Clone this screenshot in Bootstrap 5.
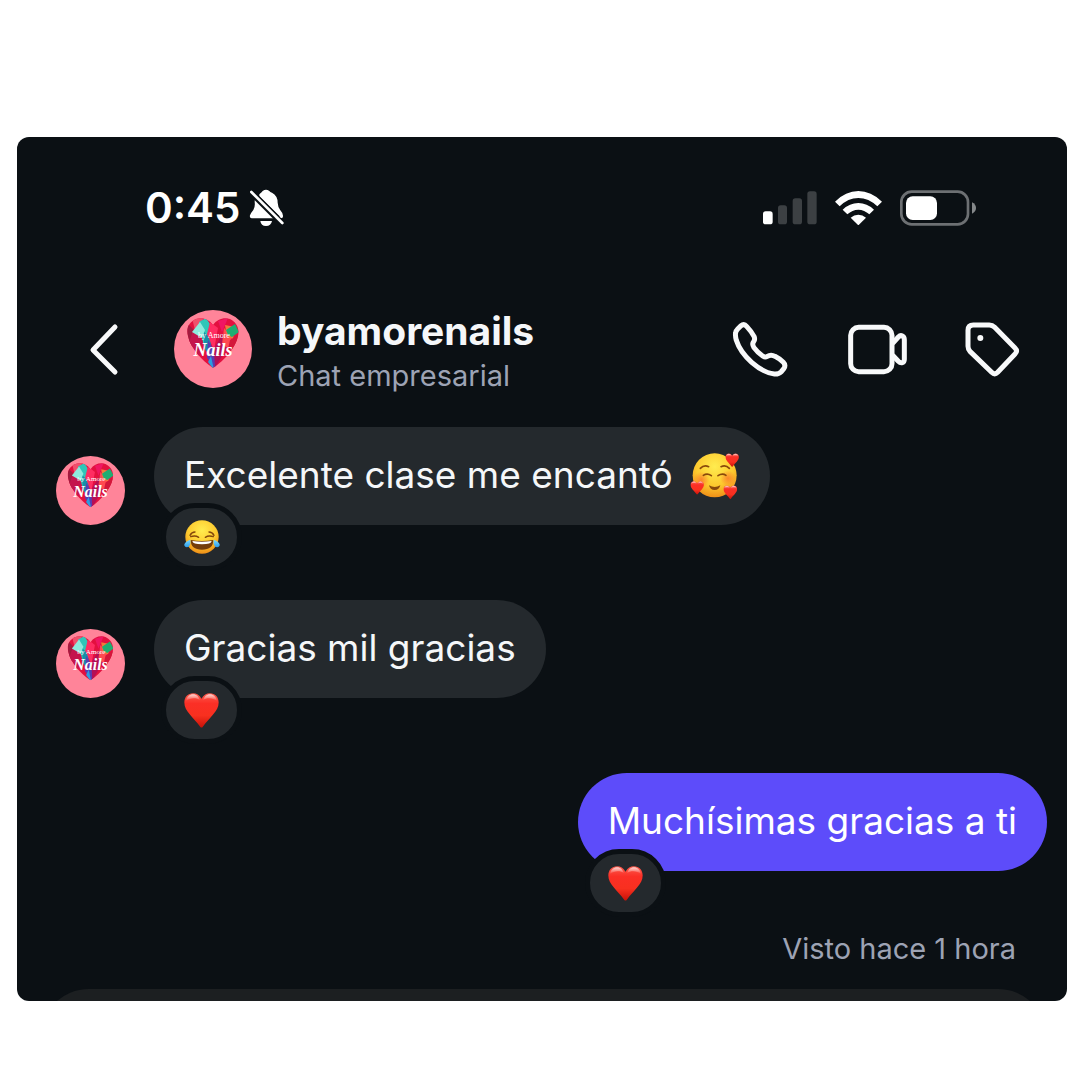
<!DOCTYPE html>
<html lang="es">
<head>
<meta charset="utf-8">
<meta name="viewport" content="width=device-width, initial-scale=1">
<title>byamorenails</title>
<link href="https://cdn.jsdelivr.net/npm/bootstrap@5.3.0/dist/css/bootstrap.min.css" rel="stylesheet">
<style>
  body { background: #fff; font-family: Inter, "Liberation Sans", sans-serif; }
  svg { display: block; flex: none; }
  .phone-panel { margin: 137px 13px 79px 17px; background: #0b1014; border-radius: 12px; color: #f5f7f9; }
  .status-row { padding: 41px 91px 0 128px; height: 101px; }
  .clock { font-size: 42px; line-height: 60px; font-weight: 600; color: #fff; }
  .status-icons { gap: 18px; }
  .chat-head { padding: 68px 45px 0 71px; }
  .head-actions { gap: 56px; }
  .icon-btn { padding: 0; border: 0; background: none; color: #f8f9fa; }
  .back-btn { margin-right: 54px; }
  .face-lg { width: 78px; height: 78px; }
  .face-sm { width: 69px; height: 69px; margin-right: 29px; }
  .face-by { font: 8px/1 "Liberation Serif", serif; fill: #fff; }
  .face-nails { font: italic 700 18px/1 "Liberation Serif", serif; fill: #fff; }
  .who { margin-left: 25px; }
  .who-name { font-size: 39px; line-height: 50px; font-weight: 700; margin: 0; }
  .muted-text { font-size: 29px; line-height: 40px; color: #9da3b4; margin: 0; }
  .who .muted-text { margin-bottom: -4px; }
  .thread { padding: 35px 20px 0 39px; }
  .msg { margin-bottom: 75px; }
  .bubble { position: relative; height: 98px; padding: 0 30px; border-radius: 49px; background: #24292d; font-size: 37px; line-height: 56px; gap: 17px; }
  .bubble p { margin: 0 0 2px; }
  .bubble-own { background: #5d4cfa; color: #fff; }
  .react { position: absolute; left: 7px; top: 76px; width: 81px; height: 68px; border: 5px solid #0b1014; border-radius: 34px; background: #24292d; }
  .seen { padding-right: 31px; margin-top: -17px; }
  .composer-edge { margin: 20px 20px 0 23px; height: 12px; overflow: hidden; }
  .composer-edge::before { content: ""; display: block; height: 98px; border-radius: 49px; background: #1c1f21; }
</style>
<script src="https://cdn.jsdelivr.net/npm/bootstrap@5.3.0/dist/js/bootstrap.bundle.min.js"></script>
</head>
<body>
<svg width="0" height="0" class="position-absolute" aria-hidden="true">
  <defs>
    <radialGradient id="gFace" cx=".5" cy=".3" r=".72"><stop offset="0" stop-color="#ffec4f"/><stop offset=".6" stop-color="#fdc92e"/><stop offset="1" stop-color="#ee8b16"/></radialGradient>
    <radialGradient id="gCheek"><stop offset="0" stop-color="#fb6a2a" stop-opacity=".7"/><stop offset="1" stop-color="#fb6a2a" stop-opacity="0"/></radialGradient>
    <linearGradient id="gHeart" x1="0" y1="0" x2="0" y2="1"><stop offset="0" stop-color="#fb5a4c"/><stop offset=".3" stop-color="#fb2f26"/><stop offset=".65" stop-color="#f8301f"/><stop offset="1" stop-color="#c81208"/></linearGradient>
    <linearGradient id="gShine" x1="0" y1="0" x2="0" y2="1"><stop offset="0" stop-color="#fff" stop-opacity=".75"/><stop offset="1" stop-color="#fff" stop-opacity="0"/></linearGradient>
    <linearGradient id="gTear" x1="0" y1="0" x2="0" y2="1"><stop offset="0" stop-color="#7fdcff"/><stop offset="1" stop-color="#2a9bea"/></linearGradient>
    <clipPath id="heartClip"><path d="M39 15C35 9 28 7 22 9C15 12 12 18 14 26C16 37 27 50 39 58C51 50 62 37 64 26C66 18 62 12 56 9C50 7 43 9 39 15Z"/></clipPath>
  </defs>
  <symbol id="face" viewBox="0 0 78 78">
    <circle cx="39" cy="39" r="39" fill="#ff8499"/>
    <g clip-path="url(#heartClip)">
      <path fill="#e3103f" d="M0 0h78v78H0z"/>
      <path fill="#a31b3f" d="M12 12l8 8-2 20-8-10z"/><path fill="#f0506c" d="M18 8l12 0-9 12z"/>
      <path fill="#c4144c" d="M19 21l10 10-4 15-10-14z"/>
      <path fill="#2fc6b8" d="M25 12l7-4 4 6-3 14 3 14-6-6-3-12z"/><path fill="#8eeadd" d="M18 22l8-10 5 8-3 8z"/>
      <path fill="#168fa8" d="M30 22l6 6 3 22-9-12z"/><path fill="#5b3bb0" d="M34 30l6 10 2 20-9-12z"/>
      <path fill="#ff2d62" d="M36 12l8 6-4 22-7-16z"/><path fill="#f01663" d="M44 11l10-3-6 14z"/>
      <path fill="#b40f56" d="M40 38l10-16 4 14-13 22z"/><path fill="#ff4a50" d="M50 18l8 8-2 14-8-6z"/>
      <path fill="#f4793b" d="M51 15l10 2-2 12-6-3z"/><path fill="#1fae72" d="M52 20l9-6 4 8-7 5-4-2z"/><path fill="#2b9de0" d="M37 46l3 14-6-8z"/>
      <path fill="#d3173a" d="M56 30l10-6-6 18-8 6z"/>
    </g>
  </symbol>
  <symbol id="heart" viewBox="0 0 104 104">
    <path fill="url(#gHeart)" d="M52 17C46 6 37 1 27 1C12 1 1 12 1 28C1 54 28 72 48 100Q52 105 56 100C76 72 103 54 103 28C103 12 92 1 77 1C67 1 58 6 52 17Z"/>
    <path fill="url(#gShine)" d="M6 24C8 11 17 4 27 4S44 11 47 21C36 13 18 14 6 24ZM98 24C96 11 87 4 77 4S60 11 57 21C68 13 86 14 98 24Z"/>
  </symbol>
</svg>

<main class="phone-panel overflow-hidden">
  <div class="status-row d-flex justify-content-between align-items-center">
    <div class="d-flex align-items-center gap-2">
      <span class="clock">0:45</span>
      <svg width="37" height="40" viewBox="355 57 111 120" role="img" aria-label="Silencio">
        <path fill="#fff" d="M389 76Q396 70 399 66Q409 58 419 66Q421 69 427 71Q444 80 444 101Q445 116 452 124Q460 133 460 140Q461 148 454 148H446L450 142L389 81ZM377 88L436 148H366Q359 147 361 139Q364 131 371 123Q377 113 375 99Q375 92 377 88ZM392 156H427Q424 171 409 171T392 156Z"/>
        <path d="M367 73L455 161" stroke="#0b1014" stroke-width="18"/><path d="M365 69L458 162" stroke="#fff" stroke-width="8" stroke-linecap="round"/>
      </svg>
    </div>
    <div class="status-icons d-flex align-items-center">
      <svg width="54" height="34" viewBox="69 62 162 102" role="img" aria-label="Cobertura">
        <rect x="69" y="123" width="29" height="39" rx="8" fill="#fff"/>
        <g fill="#3c4043"><rect x="114" y="105" width="27" height="57" rx="8"/><rect x="158" y="84" width="28" height="78" rx="8"/><rect x="202" y="63" width="28" height="99" rx="8"/></g>
      </svg>
      <svg width="47" height="34" viewBox="285 60 141 102" role="img" aria-label="Wi-Fi">
        <g fill="#fff"><path d="M285 92Q317 60 355 60T426 92L412 106Q386 81 355 81T299 106Z"/><path d="M308 116Q329 96 355 96T402 116L388 130Q373 116 355 116T322 130Z"/><path d="M332 140Q342 131 355 131T378 140L355 163Z"/></g>
      </svg>
      <svg width="76" height="36" viewBox="480 58 228 108" role="img" aria-label="Batería">
        <rect x="484" y="63" width="200" height="98" rx="31" fill="none" stroke="#6d7073" stroke-width="8"/><rect x="498" y="77" width="93" height="71" rx="20" fill="#fff"/><path fill="#85888a" d="M696 95Q708 101 708 112T696 129Z"/>
      </svg>
    </div>
  </div>

  <header class="chat-head d-flex align-items-center">
    <button type="button" class="icon-btn back-btn" aria-label="Volver">
      <svg width="32" height="54" viewBox="0 0 32 54" fill="none" stroke="currentColor" stroke-width="5" stroke-linecap="round" stroke-linejoin="round"><path d="M27 5L5 28L27 50"/></svg>
    </button>
    <svg class="face-lg" viewBox="0 0 78 78" role="img" aria-label="by Amore Nails"><use href="#face"/><text class="face-by" x="40" y="28" text-anchor="middle">by Amore</text><text class="face-nails" x="39" y="46" text-anchor="middle">Nails</text></svg>
    <div class="who me-auto">
      <h1 class="who-name">byamorenails</h1>
      <p class="muted-text">Chat empresarial</p>
    </div>
    <div class="head-actions d-flex">
      <button type="button" class="icon-btn" aria-label="Llamar">
        <svg width="60" height="60" viewBox="60 57 180 180" fill="none" stroke="currentColor" stroke-width="15" stroke-linejoin="round"><path d="M83 87L92 78Q102 70 110 79Q124 94 132 109Q136 118 131 125Q125 132 132 143Q142 157 158 168Q165 173 172 169Q183 162 195 169Q209 176 220 187Q228 195 222 205L214 215Q206 223 193 222Q162 219 125 187Q90 156 79 121Q75 106 77 98Q78 92 83 87Z"/></svg>
      </button>
      <button type="button" class="icon-btn" aria-label="Videollamada">
        <svg width="60" height="60" viewBox="408 57 180 180" overflow="visible" fill="none" stroke="currentColor" stroke-width="15" stroke-linejoin="round"><rect x="422" y="82" width="124" height="133" rx="24"/><path d="M548 130L565 111Q571 105 577 108Q583 111 583 119V178Q583 186 577 188Q571 190 565 184L548 166"/></svg>
      </button>
      <button type="button" class="icon-btn" aria-label="Etiqueta">
        <svg width="60" height="60" viewBox="756 57 180 180" fill="none" stroke="currentColor" stroke-width="15" stroke-linejoin="round"><path d="M790 75H838Q847 75 854 82L915 144Q924 153 915 162L863 217Q854 226 845 217L780 154Q774 148 774 139V91Q774 75 790 75Z"/><circle cx="811" cy="114" r="9" fill="currentColor" stroke="none"/></svg>
      </button>
    </div>
  </header>

  <section class="thread" aria-label="Mensajes">
    <div class="msg d-flex align-items-end">
      <svg class="face-sm" viewBox="0 0 78 78" role="img" aria-label="by Amore Nails"><use href="#face"/><text class="face-by" x="40" y="28" text-anchor="middle">by Amore</text><text class="face-nails" x="39" y="46" text-anchor="middle">Nails</text></svg>
      <div class="bubble d-flex align-items-center">
        <p>Excelente clase me encantó</p>
        <svg width="50" height="48" viewBox="85 93 150 144" role="img" aria-label="Cara sonriente con corazones">
          <circle cx="159" cy="163" r="66" fill="url(#gFace)"/>
          <circle cx="119" cy="176" r="24" fill="url(#gCheek)"/><circle cx="199" cy="172" r="24" fill="url(#gCheek)"/>
          <g fill="none" stroke="#8a4a0b" stroke-width="5" stroke-linecap="round"><path d="M116 142Q127 130 141 137M178 137Q192 130 203 142M125 163Q137 155 149 164M169 164Q182 155 193 163"/></g>
          <path d="M142 193Q159 203 176 193Q173 207 159 207T142 193Z" fill="#8a4a0b"/>
          <use href="#heart" x="191" y="97" width="41" height="41"/><use href="#heart" x="86" y="180" width="41" height="41"/><use href="#heart" x="185" y="193" width="42" height="42"/>
        </svg>
        <span class="react d-flex align-items-center justify-content-center">
          <svg width="36" height="34" viewBox="431 299 108 102" role="img" aria-label="Cara con lágrimas de alegría">
            <circle cx="485" cy="350" r="50" fill="url(#gFace)"/>
            <g fill="none" stroke="#84470c" stroke-width="4" stroke-linecap="round"><path d="M449 345Q454 335 464 335M521 345Q516 335 506 335M451 349Q465 344 475 351M519 349Q505 344 495 351"/></g>
            <path d="M451 359Q485 365 519 359Q519 388 485 388T451 359Z" fill="#743c0a"/><path d="M456 362Q485 367 514 362Q513 372 485 372T456 362Z" fill="#fff"/>
            <path d="M450 358Q452 380 440 381Q431 380 432 372Q435 363 450 358ZM520 358Q518 380 530 381Q539 380 538 372Q535 363 520 358Z" fill="url(#gTear)"/>
          </svg>
        </span>
      </div>
    </div>

    <div class="msg d-flex align-items-end">
      <svg class="face-sm" viewBox="0 0 78 78" role="img" aria-label="by Amore Nails"><use href="#face"/><text class="face-by" x="40" y="28" text-anchor="middle">by Amore</text><text class="face-nails" x="39" y="46" text-anchor="middle">Nails</text></svg>
      <div class="bubble d-flex align-items-center">
        <p>Gracias mil gracias</p>
        <span class="react d-flex align-items-center justify-content-center"><svg width="35" height="35" role="img" aria-label="Corazón"><use href="#heart"/></svg></span>
      </div>
    </div>

    <div class="msg d-flex justify-content-end">
      <div class="bubble bubble-own d-flex align-items-center">
        <p>Muchísimas gracias a ti</p>
        <span class="react d-flex align-items-center justify-content-center"><svg width="35" height="35" role="img" aria-label="Corazón"><use href="#heart"/></svg></span>
      </div>
    </div>

    <p class="seen muted-text text-end">Visto hace 1 hora</p>
  </section>
  <div class="composer-edge"></div>
</main>
</body>
</html>
